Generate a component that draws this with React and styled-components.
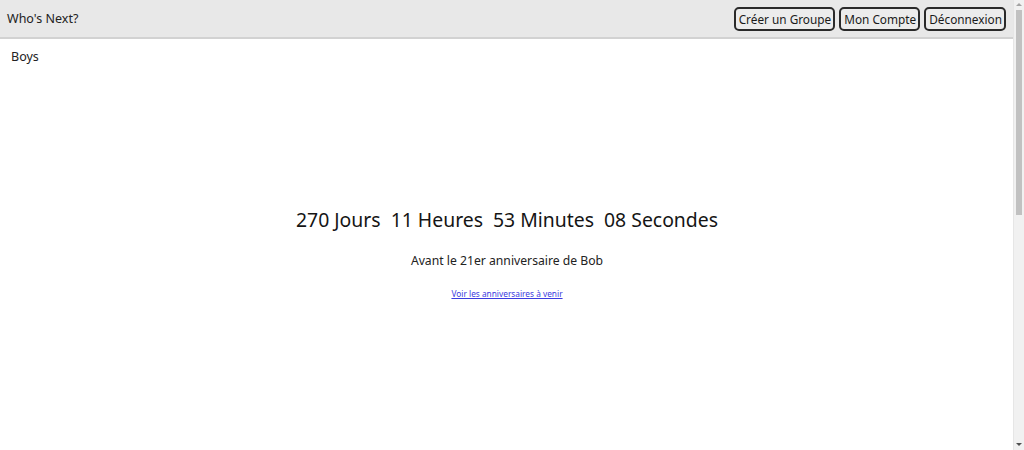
import React from "react";
import styled, { createGlobalStyle } from "styled-components";

const Global = createGlobalStyle`
  html, body { margin: 0; padding: 0; }
  body {
    font-family: "Noto Sans", "DejaVu Sans", sans-serif;
    color: #1a1a1a;
    background: #fff;
  }
  #root { margin-right: 10px; }
`;

const Header = styled.header`
  display: flex;
  align-items: center;
  justify-content: space-between;
  height: 37px;
  padding: 0 8px 0 7px;
  background: #e8e8e8;
  border-bottom: 2px solid #d2d2d2;
`;

const Brand = styled.div`
  font-size: 12.5px;
  color: #222;
`;

const Nav = styled.nav`
  display: flex;
  gap: 4px;
`;

const NavButton = styled.button`
  font-family: inherit;
  font-size: 11.8px;
  color: #1a1a1a;
  background: #ececec;
  border: 2px solid #2a2a2a;
  border-radius: 5px;
  height: 24px;
  padding: 0 2px 0 3px;
  cursor: pointer;
`;

const Main = styled.main`
  min-height: 866px;
  padding: 9px 11px;
  display: flex;
  flex-direction: column;
`;

const GroupName = styled.div`
  font-size: 12.5px;
  color: #222;
`;

const Center = styled.section`
  display: flex;
  flex-direction: column;
  align-items: center;
  margin-top: 141px;
`;

const Countdown = styled.div`
  display: flex;
  gap: 10px;
  font-size: 19.4px;
  color: #151515;
`;

const Subtitle = styled.div`
  margin-top: 19px;
  font-size: 12.2px;
  color: #222;
`;

const Link = styled.a`
  margin-top: 19px;
  font-size: 8.3px;
  color: #3b3be0;
  text-decoration: underline;
`;

const ScrollTrack = styled.div`
  position: fixed;
  top: 0;
  right: 0;
  width: 10px;
  height: 100vh;
  background: #f1f1f1;
  border-left: 1px solid #e6e6e6;
`;

const ScrollThumb = styled.div`
  position: absolute;
  top: 10px;
  left: 2px;
  width: 6px;
  height: 205px;
  background: #c1c1c1;
`;

const Arrow = styled.div`
  position: absolute;
  left: 2px;
  width: 0;
  height: 0;
  border-left: 3px solid transparent;
  border-right: 3px solid transparent;
  ${(p) =>
    p.$down
      ? "bottom: 4px; border-top: 3px solid #505050;"
      : "top: 3px; border-bottom: 3px solid #a3a3a3;"}
`;

export default function App() {
  const parts = [
    ["270", "Jours"],
    ["11", "Heures"],
    ["53", "Minutes"],
    ["08", "Secondes"],
  ];
  return (
    <>
      <Global />
      <Header>
        <Brand>Who's Next?</Brand>
        <Nav>
          <NavButton>Créer un Groupe</NavButton>
          <NavButton>Mon Compte</NavButton>
          <NavButton>Déconnexion</NavButton>
        </Nav>
      </Header>
      <Main>
        <GroupName>Boys</GroupName>
        <Center>
          <Countdown>
            {parts.map(([n, u]) => (
              <span key={u}>
                {n} {u}
              </span>
            ))}
          </Countdown>
          <Subtitle>Avant le 21er anniversaire de Bob</Subtitle>
          <Link href="#">Voir les anniversaires à venir</Link>
        </Center>
      </Main>
      <ScrollTrack>
        <Arrow />
        <ScrollThumb />
        <Arrow $down />
      </ScrollTrack>
    </>
  );
}
